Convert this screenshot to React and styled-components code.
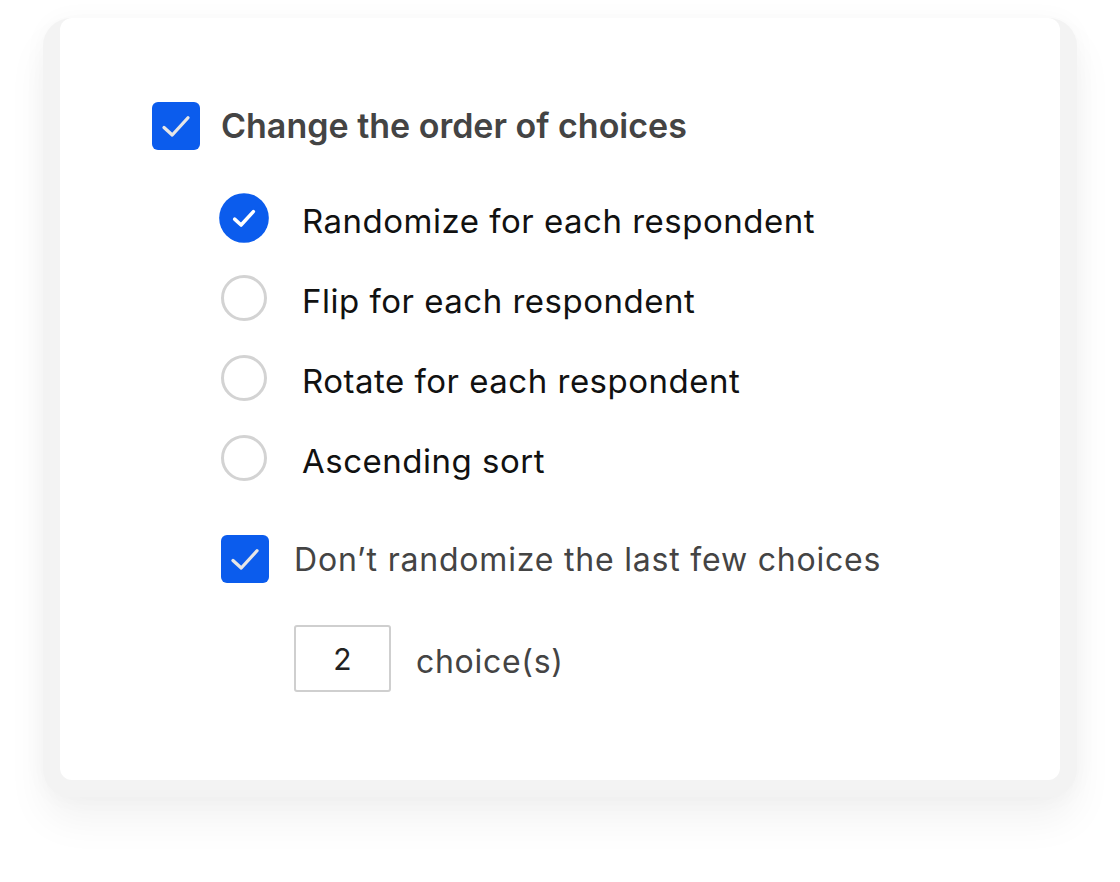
import styled, { createGlobalStyle } from 'styled-components';

const GlobalStyle = createGlobalStyle`
  html, body {
    margin: 0;
    padding: 0;
    background: #ffffff;
  }
  body {
    font-family: Inter, "Noto Sans", sans-serif;
  }
`;

const Page = styled.div`
  width: 1120px;
  height: 882px;
  padding: 18px 43px 0 43px;
  box-sizing: border-box;
`;

const Frame = styled.div`
  background: #f3f3f3;
  border-radius: 28px;
  padding: 0 17px 17px;
  box-shadow: 0 24px 40px rgba(0, 0, 0, 0.05), 0 0 24px rgba(0, 0, 0, 0.03);
`;

const Card = styled.div`
  background: #ffffff;
  border-radius: 12px;
  height: 762px;
  box-sizing: border-box;
  padding: 84px 0 0 92px;
`;

const HeaderRow = styled.label`
  display: flex;
  align-items: center;
  gap: 21px;
`;

const Heading = styled.span`
  font-size: 34px;
  font-weight: 600;
  color: #444444;
  letter-spacing: 0;
  margin-top: -1px;
`;

const Options = styled.div`
  display: flex;
  flex-direction: column;
  gap: 34px;
  padding: 45px 0 0 69px;
`;

const OptionRow = styled.label`
  display: flex;
  align-items: center;
  gap: 35px;
  height: 46px;
`;

const OptionText = styled.span`
  font-size: 33px;
  color: #111111;
  letter-spacing: 0.5px;
  margin-top: 5px;
`;

const Radio = styled.span`
  width: 46px;
  height: 46px;
  border-radius: 50%;
  box-sizing: border-box;
  flex-shrink: 0;
  display: flex;
  align-items: center;
  justify-content: center;
  border: ${(p) => (p.$checked ? 'none' : '3px solid #d3d3d3')};
  background: ${(p) => (p.$checked ? '#0b5ced' : '#ffffff')};
  transform: ${(p) => (p.$checked ? 'scale(1.08)' : 'none')};
`;

const Box = styled.span`
  width: 48px;
  height: 48px;
  border-radius: 6px;
  background: #0b5ced;
  flex-shrink: 0;
  display: flex;
  align-items: center;
  justify-content: center;
`;

const SubRow = styled.label`
  display: flex;
  align-items: center;
  gap: 25px;
  margin-top: 20px;
`;

const SubText = styled.span`
  font-size: 32px;
  color: #444444;
  letter-spacing: 0.8px;
  margin-top: 1px;
`;

const CountRow = styled.div`
  display: flex;
  align-items: center;
  gap: 25px;
  padding: 42px 0 0 142px;
`;

const CountInput = styled.input`
  width: 97px;
  height: 67px;
  box-sizing: border-box;
  border: 2px solid #cfcfcf;
  border-radius: 3px;
  text-align: center;
  font-family: Inter, "Noto Sans", sans-serif;
  font-size: 30px;
  color: #222222;
  outline: none;
  padding: 0;
`;

const CountLabel = styled.span`
  font-size: 32px;
  color: #444444;
  letter-spacing: 0.7px;
  margin-top: 6px;
`;

const Check = ({ color = '#e6e6e6', size = 36, width = 2.2 }) => (
  <svg width={size} height={size} viewBox="0 0 24 24" fill="none">
    <path d="M4 13 L9.5 18 L20 6.5" stroke={color} strokeWidth={width} strokeLinecap="round" strokeLinejoin="round" />
  </svg>
);

const options = [
  'Randomize for each respondent',
  'Flip for each respondent',
  'Rotate for each respondent',
  'Ascending sort',
];

export default function App() {
  return (
    <>
      <GlobalStyle />
      <Page>
        <Frame>
          <Card>
            <HeaderRow>
              <Box>
                <Check />
              </Box>
              <Heading>Change the order of choices</Heading>
            </HeaderRow>
            <Options>
              {options.map((text, i) => (
                <OptionRow key={text}>
                  <Radio $checked={i === 0}>
                    {i === 0 && <Check color="#ffffff" size={26} width={3} />}
                  </Radio>
                  <OptionText>{text}</OptionText>
                </OptionRow>
              ))}
              <SubRow>
                <Box>
                  <Check />
                </Box>
                <SubText>Don’t randomize the last few choices</SubText>
              </SubRow>
            </Options>
            <CountRow>
              <CountInput type="text" defaultValue="2" readOnly />
              <CountLabel>choice(s)</CountLabel>
            </CountRow>
          </Card>
        </Frame>
      </Page>
    </>
  );
}
